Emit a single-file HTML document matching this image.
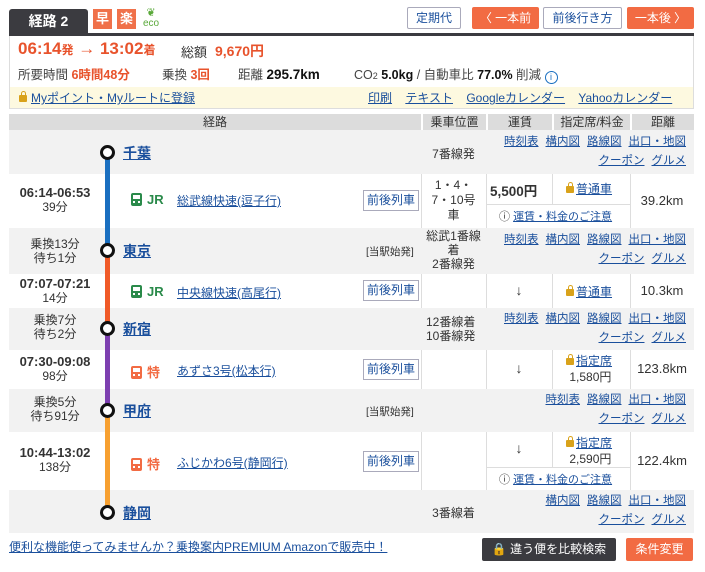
<!DOCTYPE html>
<html><head><meta charset="utf-8"><style>
*{margin:0;padding:0;box-sizing:border-box}
body{width:705px;height:572px;background:#fff;font-family:"Liberation Sans","Noto Sans CJK JP",sans-serif;font-size:12px;color:#333;position:relative;overflow:hidden}
.a{position:absolute;white-space:nowrap}
a,.l{color:#1a4f9c;text-decoration:underline}
.red{color:#e8532c;font-weight:bold}
.btn{position:absolute;border:1px solid #aab;background:#fff;color:#1a4f9c;font-size:12px;text-align:center;border-radius:2px}
.ob{position:absolute;background:#f26b43;color:#fff;font-size:12px;text-align:center;border-radius:2px}
.gray{position:absolute;left:9px;width:685px;background:#f2f2f2}
.vl{position:absolute;width:1px;background:#ddd}
.st{font-size:14px;font-weight:bold;color:#1a4f9c;text-decoration:underline}
.dot{position:absolute;left:100px;width:15px;height:15px;border:3px solid #111;border-radius:50%;background:#fff}
.tm{position:absolute;left:9px;width:92px;text-align:center;line-height:14px}
.tm b{font-size:13px}
.lk{position:absolute;right:19px;text-align:right;line-height:19px;font-size:11.5px}
.lk a{margin-left:7px}
.zb{position:absolute;left:363px;width:56px;height:21px;border:1px solid #aab;color:#1a4f9c;text-align:center;line-height:19px;background:#fff;font-size:12px}
.c{text-align:center}
.lock{display:inline-block;width:8px;height:7px;background:#d9a21a;border-radius:1px;position:relative;margin-right:2px;vertical-align:0}
.lock:before{content:"";position:absolute;left:1.5px;top:-4px;width:3px;height:4px;border:1px solid #d9a21a;border-bottom:none;border-radius:3px 3px 0 0}
.tr{display:inline-block;width:11px;height:13px;border-radius:2px;position:relative;vertical-align:-2px;margin-right:5px}
.tr:before{content:"";position:absolute;left:2px;top:2px;width:7px;height:4px;background:#fff}
.tr:after{content:"";position:absolute;left:2px;top:8px;width:2px;height:2px;background:#fff;box-shadow:5px 0 0 #fff}
</style></head><body>

<div class="a" style="left:9px;top:9px;width:79px;height:25px;background:#3b3b40;color:#fff;font-weight:bold;font-size:14px;text-align:center;line-height:25px;border-radius:3px 3px 0 0">経路 2</div>
<div class="a" style="left:93px;top:9px;width:19px;height:20px;background:#f0714a;color:#fff;font-size:13px;text-align:center;line-height:20px;font-weight:bold">早</div>
<div class="a" style="left:117px;top:9px;width:19px;height:20px;background:#f0714a;color:#fff;font-size:13px;text-align:center;line-height:20px;font-weight:bold">楽</div>
<div class="a" style="left:141px;top:8px;color:#5aa93a;font-size:10px;line-height:10px;text-align:center;width:20px"><span style="font-size:11px">❦</span><br>eco</div>

<div class="btn" style="left:407px;top:7px;width:54px;height:22px;line-height:20px">定期代</div>
<div class="ob" style="left:472px;top:7px;width:67px;height:22px;line-height:22px">〈 一本前</div>
<div class="btn" style="left:543px;top:7px;width:79px;height:22px;line-height:20px">前後行き方</div>
<div class="ob" style="left:627px;top:7px;width:67px;height:22px;line-height:22px">一本後 〉</div>

<div class="a" style="left:9px;top:33px;width:685px;height:3px;background:#3b3b40"></div>
<div class="a" style="left:9px;top:36px;width:685px;height:73px;border:1px solid #ddd;border-top:none"></div>
<div class="a" style="left:18px;top:39px;font-size:17px;line-height:20px"><span class="red">06:14<span style="font-size:12px">発</span> → 13:02<span style="font-size:12px">着</span></span></div>
<div class="a" style="left:181px;top:42px;font-size:13px">総額</div>
<div class="a red" style="left:215px;top:41px;font-size:14px">9,670円</div>
<div class="a" style="left:18px;top:64px;font-size:12.5px;color:#444">所要時間 <span class="red">6時間48分</span></div>
<div class="a" style="left:162px;top:64px;font-size:12.5px;color:#444">乗換 <span class="red">3回</span></div>
<div class="a" style="left:238px;top:64px;font-size:12.5px;color:#444">距離 <b style="color:#111;font-size:13.5px">295.7km</b></div>
<div class="a" style="left:354px;top:64px;font-size:12.5px;color:#444">CO<span style="font-size:9px">2</span> <b style="color:#111">5.0kg</b> / 自動車比 <b style="color:#111">77.0%</b> 削減 <span style="color:#1a6fc0;display:inline-block;width:13px;height:13px;border:1px solid #1a6fc0;border-radius:50%;font-size:9px;text-align:center;line-height:11px;vertical-align:-1px">i</span></div>
<div class="a" style="left:10px;top:87px;width:683px;height:21px;background:#fdf9e0"></div>
<div class="a" style="left:19px;top:89px;font-size:12px"><span class="lock" style="margin-right:4px"></span><a>Myポイント・Myルートに登録</a></div>
<div class="a" style="left:368px;top:89px;font-size:12px"><a>印刷</a>&nbsp;&nbsp;&nbsp; <a>テキスト</a>&nbsp;&nbsp;&nbsp; <a>Googleカレンダー</a>&nbsp;&nbsp;&nbsp; <a>Yahooカレンダー</a></div>

<div class="a" style="left:9px;top:114px;width:685px;height:16px;background:#dcdcdc"></div>
<div class="a c" style="left:9px;top:114px;width:412px;line-height:16px">経路</div>
<div class="a c" style="left:421px;top:114px;width:65px;line-height:16px;border-left:2px solid #fff">乗車位置</div>
<div class="a c" style="left:486px;top:114px;width:66px;line-height:16px;border-left:2px solid #fff">運賃</div>
<div class="a c" style="left:552px;top:114px;width:78px;line-height:16px;border-left:2px solid #fff">指定席/料金</div>
<div class="a c" style="left:630px;top:114px;width:64px;line-height:16px;border-left:2px solid #fff">距離</div>

<div class="gray" style="top:130px;height:44px"></div>
<div class="gray" style="top:228px;height:46px"></div>
<div class="gray" style="top:308px;height:42px"></div>
<div class="gray" style="top:389px;height:43px"></div>
<div class="gray" style="top:490px;height:43px"></div>

<div class="vl" style="left:421px;top:174px;height:54px"></div><div class="vl" style="left:486px;top:174px;height:54px"></div><div class="vl" style="left:552px;top:174px;height:31px"></div><div class="vl" style="left:630px;top:174px;height:54px"></div>
<div class="a" style="left:486px;top:204px;width:144px;height:1px;background:#ddd"></div>
<div class="vl" style="left:421px;top:274px;height:34px"></div><div class="vl" style="left:486px;top:274px;height:34px"></div><div class="vl" style="left:552px;top:274px;height:34px"></div><div class="vl" style="left:630px;top:274px;height:34px"></div>
<div class="vl" style="left:421px;top:350px;height:39px"></div><div class="vl" style="left:486px;top:350px;height:39px"></div><div class="vl" style="left:552px;top:350px;height:39px"></div><div class="vl" style="left:630px;top:350px;height:39px"></div>
<div class="vl" style="left:421px;top:432px;height:58px"></div><div class="vl" style="left:486px;top:432px;height:58px"></div><div class="vl" style="left:552px;top:432px;height:35px"></div><div class="vl" style="left:630px;top:432px;height:58px"></div>
<div class="a" style="left:486px;top:467px;width:144px;height:1px;background:#ddd"></div>

<div class="a" style="left:105px;top:152px;width:5px;height:98px;background:#1a6fc0"></div>
<div class="a" style="left:105px;top:250px;width:5px;height:78px;background:#f05a28"></div>
<div class="a" style="left:105px;top:328px;width:5px;height:82px;background:#7d3fb0"></div>
<div class="a" style="left:105px;top:410px;width:5px;height:102px;background:#f7a030"></div>
<div class="dot" style="top:145px"></div>
<div class="dot" style="top:243px"></div>
<div class="dot" style="top:321px"></div>
<div class="dot" style="top:403px"></div>
<div class="dot" style="top:505px"></div>

<div class="a st" style="left:123px;top:143px">千葉</div>
<div class="a st" style="left:123px;top:241px">東京</div>
<div class="a st" style="left:123px;top:319px">新宿</div>
<div class="a st" style="left:123px;top:401px">甲府</div>
<div class="a st" style="left:123px;top:503px">静岡</div>
<div class="a" style="left:366px;top:244px;font-size:10.5px">[当駅始発]</div>
<div class="a" style="left:366px;top:404px;font-size:10.5px">[当駅始発]</div>

<div class="tm" style="top:237px">乗換13分<br>待ち1分</div>
<div class="tm" style="top:313px">乗換7分<br>待ち2分</div>
<div class="tm" style="top:395px">乗換5分<br>待ち91分</div>

<div class="a c" style="left:421px;top:145px;width:65px">7番線発</div>
<div class="a c" style="left:421px;top:229px;width:65px;line-height:14px">総武1番線<br>着<br>2番線発</div>
<div class="a" style="left:426px;top:315px;line-height:14px">12番線着<br>10番線発</div>
<div class="a c" style="left:421px;top:504px;width:65px">3番線着</div>

<div class="lk" style="top:133px"><a>時刻表</a><a>構内図</a><a>路線図</a><a>出口・地図</a><br><a>クーポン</a><a>グルメ</a></div>
<div class="lk" style="top:231px"><a>時刻表</a><a>構内図</a><a>路線図</a><a>出口・地図</a><br><a>クーポン</a><a>グルメ</a></div>
<div class="lk" style="top:310px"><a>時刻表</a><a>構内図</a><a>路線図</a><a>出口・地図</a><br><a>クーポン</a><a>グルメ</a></div>
<div class="lk" style="top:391px"><a>時刻表</a><a>路線図</a><a>出口・地図</a><br><a>クーポン</a><a>グルメ</a></div>
<div class="lk" style="top:492px"><a>構内図</a><a>路線図</a><a>出口・地図</a><br><a>クーポン</a><a>グルメ</a></div>

<div class="tm" style="top:186px"><b>06:14-06:53</b><br>39分</div>
<div class="a" style="left:131px;top:192px;color:#2a8a4a;font-weight:bold;font-size:13px"><span class="tr" style="background:#2a8a4a"></span>JR</div>
<div class="a l" style="left:177px;top:192px">総武線快速(逗子行)</div>
<div class="zb" style="top:190px">前後列車</div>
<div class="a c" style="left:421px;top:178px;width:65px;line-height:15px">1・4・<br>7・10号<br>車</div>
<div class="a" style="left:490px;top:180px;font-weight:bold;font-size:13.5px">5,500円</div>
<div class="a" style="left:566px;top:180px"><span class="lock"></span><a>普通車</a></div>
<div class="a" style="left:499px;top:208px;font-size:11px">ⓘ <a>運賃・料金のご注意</a></div>
<div class="a c" style="left:630px;top:193px;width:64px;font-size:13px">39.2km</div>

<div class="tm" style="top:277px"><b>07:07-07:21</b><br>14分</div>
<div class="a" style="left:131px;top:284px;color:#2a8a4a;font-weight:bold;font-size:13px"><span class="tr" style="background:#2a8a4a"></span>JR</div>
<div class="a l" style="left:177px;top:284px">中央線快速(高尾行)</div>
<div class="zb" style="top:280px">前後列車</div>
<div class="a c" style="left:486px;top:282px;width:66px;font-size:14px">↓</div>
<div class="a" style="left:566px;top:283px"><span class="lock"></span><a>普通車</a></div>
<div class="a c" style="left:630px;top:283px;width:64px;font-size:13px">10.3km</div>

<div class="tm" style="top:355px"><b>07:30-09:08</b><br>98分</div>
<div class="a" style="left:131px;top:362px;color:#f26b43;font-weight:bold;font-size:13px"><span class="tr" style="background:#f26b43"></span>特</div>
<div class="a l" style="left:177px;top:362px">あずさ3号(松本行)</div>
<div class="zb" style="top:359px">前後列車</div>
<div class="a c" style="left:486px;top:360px;width:66px;font-size:14px">↓</div>
<div class="a" style="left:566px;top:353px;line-height:16px"><span class="lock"></span><a>指定席</a><br>&nbsp;1,580円</div>
<div class="a c" style="left:630px;top:361px;width:64px;font-size:13px">123.8km</div>

<div class="tm" style="top:446px"><b>10:44-13:02</b><br>138分</div>
<div class="a" style="left:131px;top:454px;color:#f26b43;font-weight:bold;font-size:13px"><span class="tr" style="background:#f26b43"></span>特</div>
<div class="a l" style="left:177px;top:454px">ふじかわ6号(静岡行)</div>
<div class="zb" style="top:451px">前後列車</div>
<div class="a c" style="left:486px;top:440px;width:66px;font-size:14px">↓</div>
<div class="a" style="left:566px;top:435px;line-height:16px"><span class="lock"></span><a>指定席</a><br>&nbsp;2,590円</div>
<div class="a" style="left:499px;top:471px;font-size:11px">ⓘ <a>運賃・料金のご注意</a></div>
<div class="a c" style="left:630px;top:453px;width:64px;font-size:13px">122.4km</div>

<div class="a" style="left:9px;top:538px;font-size:12px"><a>便利な機能使ってみませんか？乗換案内PREMIUM Amazonで販売中！</a></div>
<div class="a" style="left:482px;top:538px;width:134px;height:23px;background:#3b3b40;color:#fff;text-align:center;line-height:23px;border-radius:2px">🔒 違う便を比較検索</div>
<div class="ob" style="left:626px;top:538px;width:67px;height:23px;line-height:23px">条件変更</div>
</body></html>
